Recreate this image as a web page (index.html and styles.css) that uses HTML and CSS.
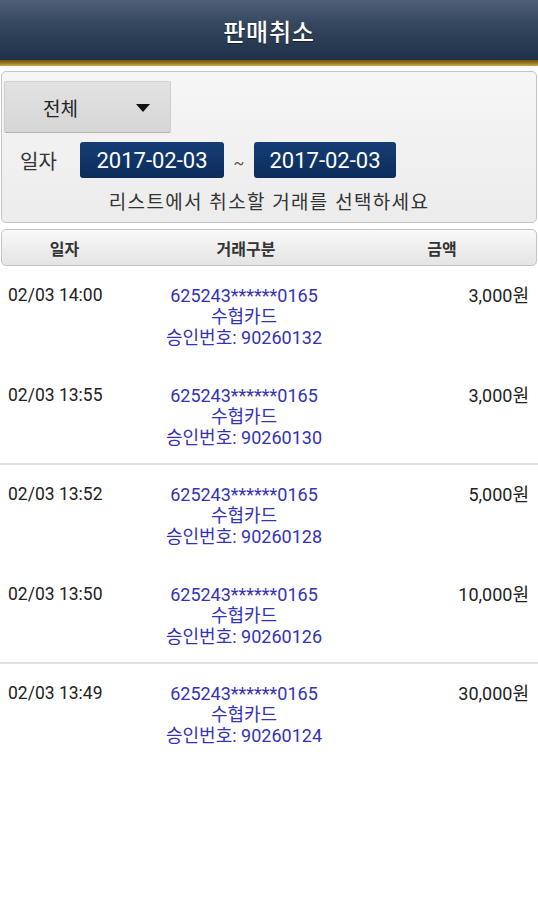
FILE: index.html
```html
<!DOCTYPE html>
<html lang="ko">
<head>
<meta charset="utf-8">
<link rel="stylesheet" href="styles.css">
</head>
<body>
<header class="appbar">
  <h1 class="title">판매취소</h1>
</header>
<div class="stripe"></div>
<section class="filter">
  <div class="select">
    <span class="select-label">전체</span>
    <svg class="caret" width="14" height="8" viewBox="0 0 14 8"><path d="M0 0 H14 L7 8 Z" fill="#111"/></svg>
  </div>
  <div class="dates">
    <span class="date-label">일자</span>
    <span class="date">2017-02-03</span>
    <span class="tilde">~</span>
    <span class="date">2017-02-03</span>
  </div>
  <p class="hint">리스트에서 취소할 거래를 선택하세요</p>
</section>
<div class="thead">
  <span class="th">일자</span>
  <span class="th">거래구분</span>
  <span class="th">금액</span>
</div>
<main class="list">
  <div class="group">
    <div class="row">
      <span class="when">02/03 14:00</span>
      <div class="info"><span>625243******0165</span><span>수협카드</span><span>승인번호: 90260132</span></div>
      <span class="amt">3,000원</span>
    </div>
    <div class="row">
      <span class="when">02/03 13:55</span>
      <div class="info"><span>625243******0165</span><span>수협카드</span><span>승인번호: 90260130</span></div>
      <span class="amt">3,000원</span>
    </div>
  </div>
  <div class="group">
    <div class="row">
      <span class="when">02/03 13:52</span>
      <div class="info"><span>625243******0165</span><span>수협카드</span><span>승인번호: 90260128</span></div>
      <span class="amt">5,000원</span>
    </div>
    <div class="row">
      <span class="when">02/03 13:50</span>
      <div class="info"><span>625243******0165</span><span>수협카드</span><span>승인번호: 90260126</span></div>
      <span class="amt">10,000원</span>
    </div>
  </div>
  <div class="group last">
    <div class="row">
      <span class="when">02/03 13:49</span>
      <div class="info"><span>625243******0165</span><span>수협카드</span><span>승인번호: 90260124</span></div>
      <span class="amt">30,000원</span>
    </div>
  </div>
</main>
</body>
</html>
```
FILE: styles.css
```css
* { box-sizing: border-box; }
html, body { margin: 0; padding: 0; background: #fff; }
body {
  width: 538px;
  height: 900px;
  overflow: hidden;
  font-family: Roboto, "Noto Sans CJK KR", sans-serif;
  color: #222;
}
.appbar {
  height: 60px;
  background: linear-gradient(#4f6076 0%, #34475e 40%, #1f3149 100%);
  display: flex;
  align-items: center;
  justify-content: center;
}
.title {
  margin: 0;
  font-family: "Noto Sans CJK KR", sans-serif;
  font-size: 24px;
  font-weight: 500;
  color: #fff;
  text-shadow: 0 1px 1px rgba(0,0,0,.5);
  letter-spacing: 0.8px;
}
.stripe {
  height: 6px;
  background: linear-gradient(#6f5214 0%, #9a7424 50%, #d2ab4c 100%);
  margin-bottom: 5px;
}
.filter {
  height: 152px;
  margin: 0 1px;
  border: 1px solid #c4c4c4;
  border-radius: 5px;
  background: linear-gradient(#f6f6f6, #ececec);
  padding: 9px 2px 0;
  display: flex;
  flex-direction: column;
}
.select {
  width: 167px;
  height: 52px;
  background: linear-gradient(#e2e2e2, #d6d6d6);
  border: 1px solid #cfcfcf;
  border-bottom-color: #b0b0b0;
  border-radius: 2px;
  display: flex;
  align-items: center;
  padding-left: 38px;
  gap: 58px;
}
.select-label {
  font-family: "Noto Sans CJK KR", sans-serif;
  font-size: 19px;
  color: #222;
}
.caret { margin-top: 2px; }
.dates {
  display: flex;
  align-items: center;
  margin-top: 9px;
  height: 36px;
}
.date-label {
  font-family: "Noto Sans CJK KR", sans-serif;
  font-size: 20px;
  color: #333;
  margin-left: 16px;
  width: 60px;
}
.date {
  width: 144px;
  height: 36px;
  background: linear-gradient(#163e74, #0b2c5c);
  border-radius: 3px;
  color: #fff;
  font-size: 22px;
  display: flex;
  align-items: center;
  justify-content: center;
}
.date:last-child { width: 142px; }
.tilde {
  width: 30px;
  text-align: center;
  color: #555;
  font-size: 16px;
  margin-top: 6px;
}
.hint {
  margin: 11px 0 0;
  text-align: center;
  font-family: "Noto Sans CJK KR", sans-serif;
  font-size: 19px;
  letter-spacing: 1.3px;
  color: #333;
  line-height: 24px;
}
.thead {
  margin: 6px 1px 0;
  height: 37px;
  border: 1px solid #c4c4c4;
  border-radius: 5px;
  background: linear-gradient(#f9f9f9, #e4e4e4);
  display: grid;
  grid-template-columns: 125px 238px 154px;
  align-items: center;
  font-family: "Noto Sans CJK KR", sans-serif;
  font-size: 16px;
  font-weight: 700;
  color: #333;
}
.th { text-align: center; }
.group {
  border-bottom: 2px solid #e0e0e0;
}
.group.last { border-bottom: none; }
.row {
  display: grid;
  grid-template-columns: 136px 216px 1fr;
  height: 100px;
  padding-top: 19px;
}
.row:last-child { height: 97px; }
.when {
  padding-left: 8px;
  font-size: 17.5px;
  color: #222;
  line-height: 21px;
}
.info {
  display: flex;
  flex-direction: column;
  align-items: center;
  color: #3333b5;
  font-size: 18px;
  line-height: 21px;
}
.amt {
  text-align: right;
  padding-right: 9px;
  font-size: 18px;
  line-height: 21px;
  color: #222;
}
```
